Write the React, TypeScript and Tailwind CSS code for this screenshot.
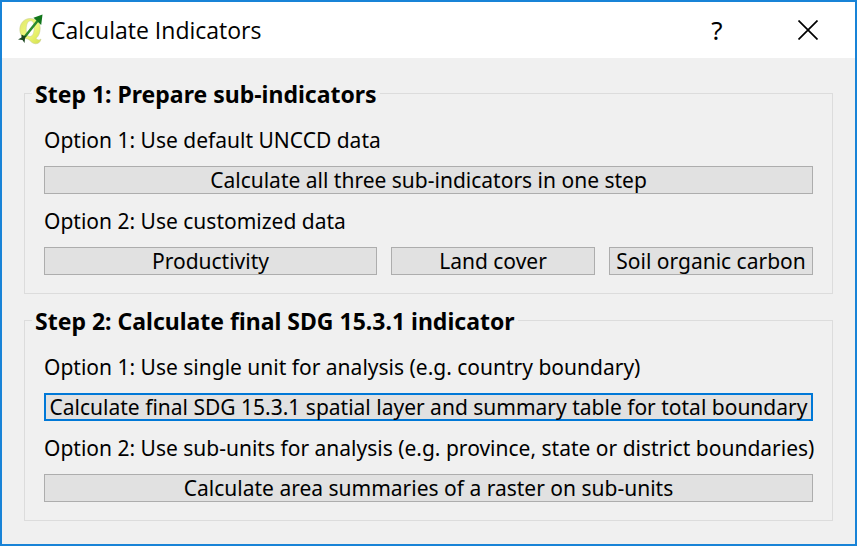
import type { ReactNode } from "react";

function QgisLogo() {
  return (
    <svg viewBox="0 0 28 32" className="h-8 w-7 shrink-0" aria-hidden="true">
      <defs>
        <linearGradient id="q-fill" x1="0" y1="0" x2="1" y2="1">
          <stop offset="0" stopColor="#dde66c" />
          <stop offset="0.5" stopColor="#f2f97c" />
          <stop offset="1" stopColor="#d3e04c" />
        </linearGradient>
      </defs>
      <path
        fillRule="evenodd"
        fill="url(#q-fill)"
        stroke="#c3c98c"
        strokeWidth="0.5"
        d="M13 4.500C7 4.500 2.800 9.500 2.800 15.500C2.800 20.500 5.500 24.500 10.500 25C13 25.500 14.500 29.800 18.500 29.800C21.500 29.800 23.500 28 24 25C22.500 26.300 20.500 26.300 19 24.300C21.800 22.300 23.200 18.500 23.200 14C23.200 8.500 19.500 4.500 13 4.500ZM13.500 6.800C16 6.800 17.200 9.500 17.200 13.500C17.200 18.500 15.800 22.500 13 22.500C10.200 22.500 9.200 19.500 9.200 15.500C9.200 10.500 10.800 6.800 13.500 6.800Z"
      />
      <path d="M8 22.500L20.500 7" stroke="#2c8a2f" strokeWidth="2.500" />
      <path d="M25.500 0.500L24.200 11L21.300 8.300L16.500 3.800Z" fill="#12761b" />
      <path d="M9.500 21.500L8 24.500L7.500 29L5.500 26L1 25.500L4.500 23.500L4.500 20.500L7.500 22Z" fill="#1a451f" />
    </svg>
  );
}

function Step({ title, children }: { title: string; children: ReactNode }) {
  return (
    <fieldset className="min-w-0 border border-[#dcdcdc] px-[19px] pb-[18px]">
      <legend className="-ml-3 px-[3px] pt-px text-[23px] leading-[26px] font-bold whitespace-nowrap">{title}</legend>
      <div className="flex flex-col gap-3 pt-[18px]">{children}</div>
    </fieldset>
  );
}

function Option({ children }: { children: ReactNode }) {
  return <p className="pt-0.5 text-[21px] leading-[27px] whitespace-nowrap">{children}</p>;
}

function ActionButton({ children, focused = false }: { children: ReactNode; focused?: boolean }) {
  return (
    <button
      type="button"
      className={
        focused
          ? "flex h-7 w-full items-center justify-center border-2 border-[#0078d7] bg-[#e1e1e1] text-[21px] leading-6 whitespace-nowrap"
          : "flex h-7 w-full items-center justify-center border border-[#adadad] bg-[#e1e1e1] text-[21px] leading-6 whitespace-nowrap"
      }
    >
      {children}
    </button>
  );
}

export default function App() {
  return (
    <div className="min-h-screen border-2 border-[#1883d7] bg-[#f0f0f0] font-['Noto_Sans',sans-serif] text-black">
      <header className="flex h-14 items-center bg-white pr-[31px] pl-[15px]">
        <QgisLogo />
        <h1 className="ml-1.5 grow text-[23px] leading-8 font-['Open_Sans',sans-serif]">Calculate Indicators</h1>
        <button type="button" aria-label="Help" className="mr-[59px] w-8 text-center text-[26px] leading-8">
          ?
        </button>
        <button type="button" aria-label="Close" className="flex size-8 items-center justify-center">
          <svg viewBox="0 0 20 20" className="size-5" aria-hidden="true">
            <path d="M0.500 0.500L19.500 19.500M19.500 0.500L0.500 19.500" stroke="#000" strokeWidth="1.700" />
          </svg>
        </button>
      </header>
      <main className="flex flex-col gap-[13px] px-[22px] pt-[22px] pb-[23px]">
        <Step title="Step 1: Prepare sub-indicators">
          <Option>Option 1: Use default UNCCD data</Option>
          <ActionButton>Calculate all three sub-indicators in one step</ActionButton>
          <Option>Option 2: Use customized data</Option>
          <div className="grid grid-cols-[333fr_204fr_204fr] gap-[14px]">
            <ActionButton>Productivity</ActionButton>
            <ActionButton>Land cover</ActionButton>
            <ActionButton>Soil organic carbon</ActionButton>
          </div>
        </Step>
        <Step title="Step 2: Calculate final SDG 15.3.1 indicator">
          <Option>Option 1: Use single unit for analysis (e.g. country boundary)</Option>
          <ActionButton focused>Calculate final SDG 15.3.1 spatial layer and summary table for total boundary</ActionButton>
          <Option>Option 2: Use sub-units for analysis (e.g. province, state or district boundaries)</Option>
          <ActionButton>Calculate area summaries of a raster on sub-units</ActionButton>
        </Step>
      </main>
    </div>
  );
}
